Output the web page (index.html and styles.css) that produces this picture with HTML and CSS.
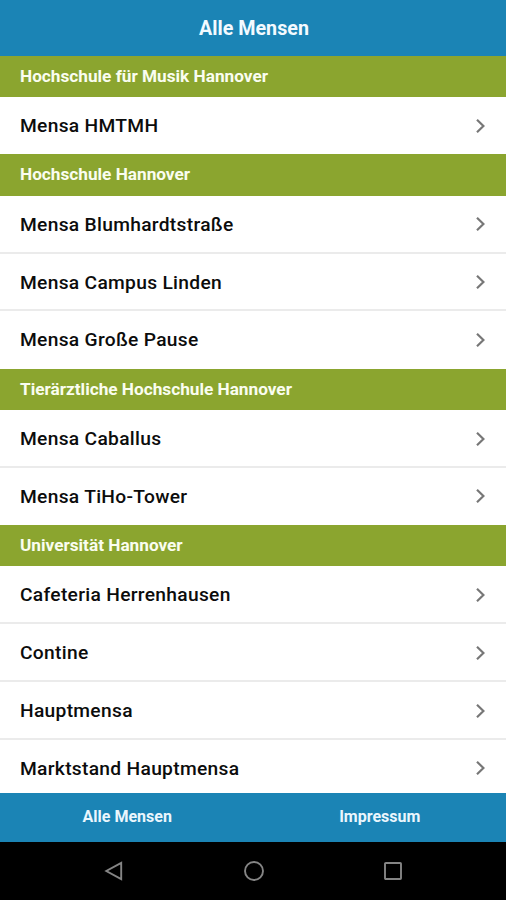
FILE: index.html
```html
<!DOCTYPE html>
<html lang="de">
<head>
<meta charset="utf-8">
<title>Alle Mensen</title>
<link rel="stylesheet" href="styles.css">
</head>
<body>
<svg class="defs" aria-hidden="true"><symbol id="chevron" viewBox="0 0 12 16"><path d="M2 1.8 8.4 8 2 14.2" fill="none" stroke="#777" stroke-width="2.2"/></symbol></svg>
<div class="app">
<header class="header"><h1>Alle Mensen</h1></header>
<main class="list">
<section>
<h2>Hochschule für Musik Hannover</h2>
<ul>
<li><span>Mensa HMTMH</span><svg class="chevron"><use href="#chevron"/></svg></li>
</ul>
</section>
<section>
<h2>Hochschule Hannover</h2>
<ul>
<li><span>Mensa Blumhardtstraße</span><svg class="chevron"><use href="#chevron"/></svg></li>
<li><span>Mensa Campus Linden</span><svg class="chevron"><use href="#chevron"/></svg></li>
<li><span>Mensa Große Pause</span><svg class="chevron"><use href="#chevron"/></svg></li>
</ul>
</section>
<section>
<h2>Tierärztliche Hochschule Hannover</h2>
<ul>
<li><span>Mensa Caballus</span><svg class="chevron"><use href="#chevron"/></svg></li>
<li><span>Mensa TiHo-Tower</span><svg class="chevron"><use href="#chevron"/></svg></li>
</ul>
</section>
<section>
<h2>Universität Hannover</h2>
<ul>
<li><span>Cafeteria Herrenhausen</span><svg class="chevron"><use href="#chevron"/></svg></li>
<li><span>Contine</span><svg class="chevron"><use href="#chevron"/></svg></li>
<li><span>Hauptmensa</span><svg class="chevron"><use href="#chevron"/></svg></li>
<li><span>Marktstand Hauptmensa</span><svg class="chevron"><use href="#chevron"/></svg></li>
</ul>
</section>
</main>
<nav class="tabs"><span>Alle Mensen</span><span>Impressum</span></nav>
<footer class="system">
<svg viewBox="0 0 24 24"><path d="M19.2 3.8v16.4L4.3 12z"/></svg>
<svg viewBox="0 0 24 24"><circle cx="12" cy="12" r="9"/></svg>
<svg viewBox="0 0 24 24"><rect x="4" y="4" width="16" height="16" rx=".8"/></svg>
</footer>
</div>
</body>
</html>
```

FILE: styles.css
```css
* { box-sizing: border-box; }
body { margin: 0; font-family: Roboto, "Liberation Sans", sans-serif; background: #fff; }
.defs { display: none; }
.app { display: flex; flex-direction: column; width: 506px; height: 900px; overflow: hidden; }
.header { flex: 0 0 56px; display: flex; align-items: center; justify-content: center; background: #1b84b5; color: #f3faff; }
h1 { margin: 0; padding: 2px 0 0 2px; font-size: 19.7px; font-weight: 700; line-height: 24px; }
.list { flex: 1; min-height: 0; overflow: hidden; }
h2 { margin: 0; height: 41.4px; padding: 0 20px; background: #8ba52f; color: #fafdf0; font-size: 17.22px; font-weight: 700; line-height: 40px; }
ul { margin: 0; padding: 0; list-style: none; }
li { display: flex; align-items: center; justify-content: space-between; height: 57.9px; padding: 1.4px 19px 0 20px; border-bottom: 2px solid #ebebeb; color: #0c0c0c; font-size: 19.22px; font-weight: 500; letter-spacing: .3px; }
li:last-child { height: 57.1px; border-bottom-color: #fff; }
section:first-child li { height: 56.9px; }
.chevron { width: 12px; height: 16px; }
.tabs { flex: 0 0 49px; display: grid; grid-template-columns: 1fr 1fr; padding: 0 0 3px 1px; align-items: center; background: #1b84b5; color: #eaf6fd; font-size: 16px; font-weight: 700; text-align: center; }
.system { flex: 0 0 58px; display: flex; justify-content: center; gap: 115.5px; padding-left: 1px; align-items: center; background: #000; }
.system svg { width: 24px; height: 24px; fill: none; stroke: #858585; stroke-width: 1.9; }
```
